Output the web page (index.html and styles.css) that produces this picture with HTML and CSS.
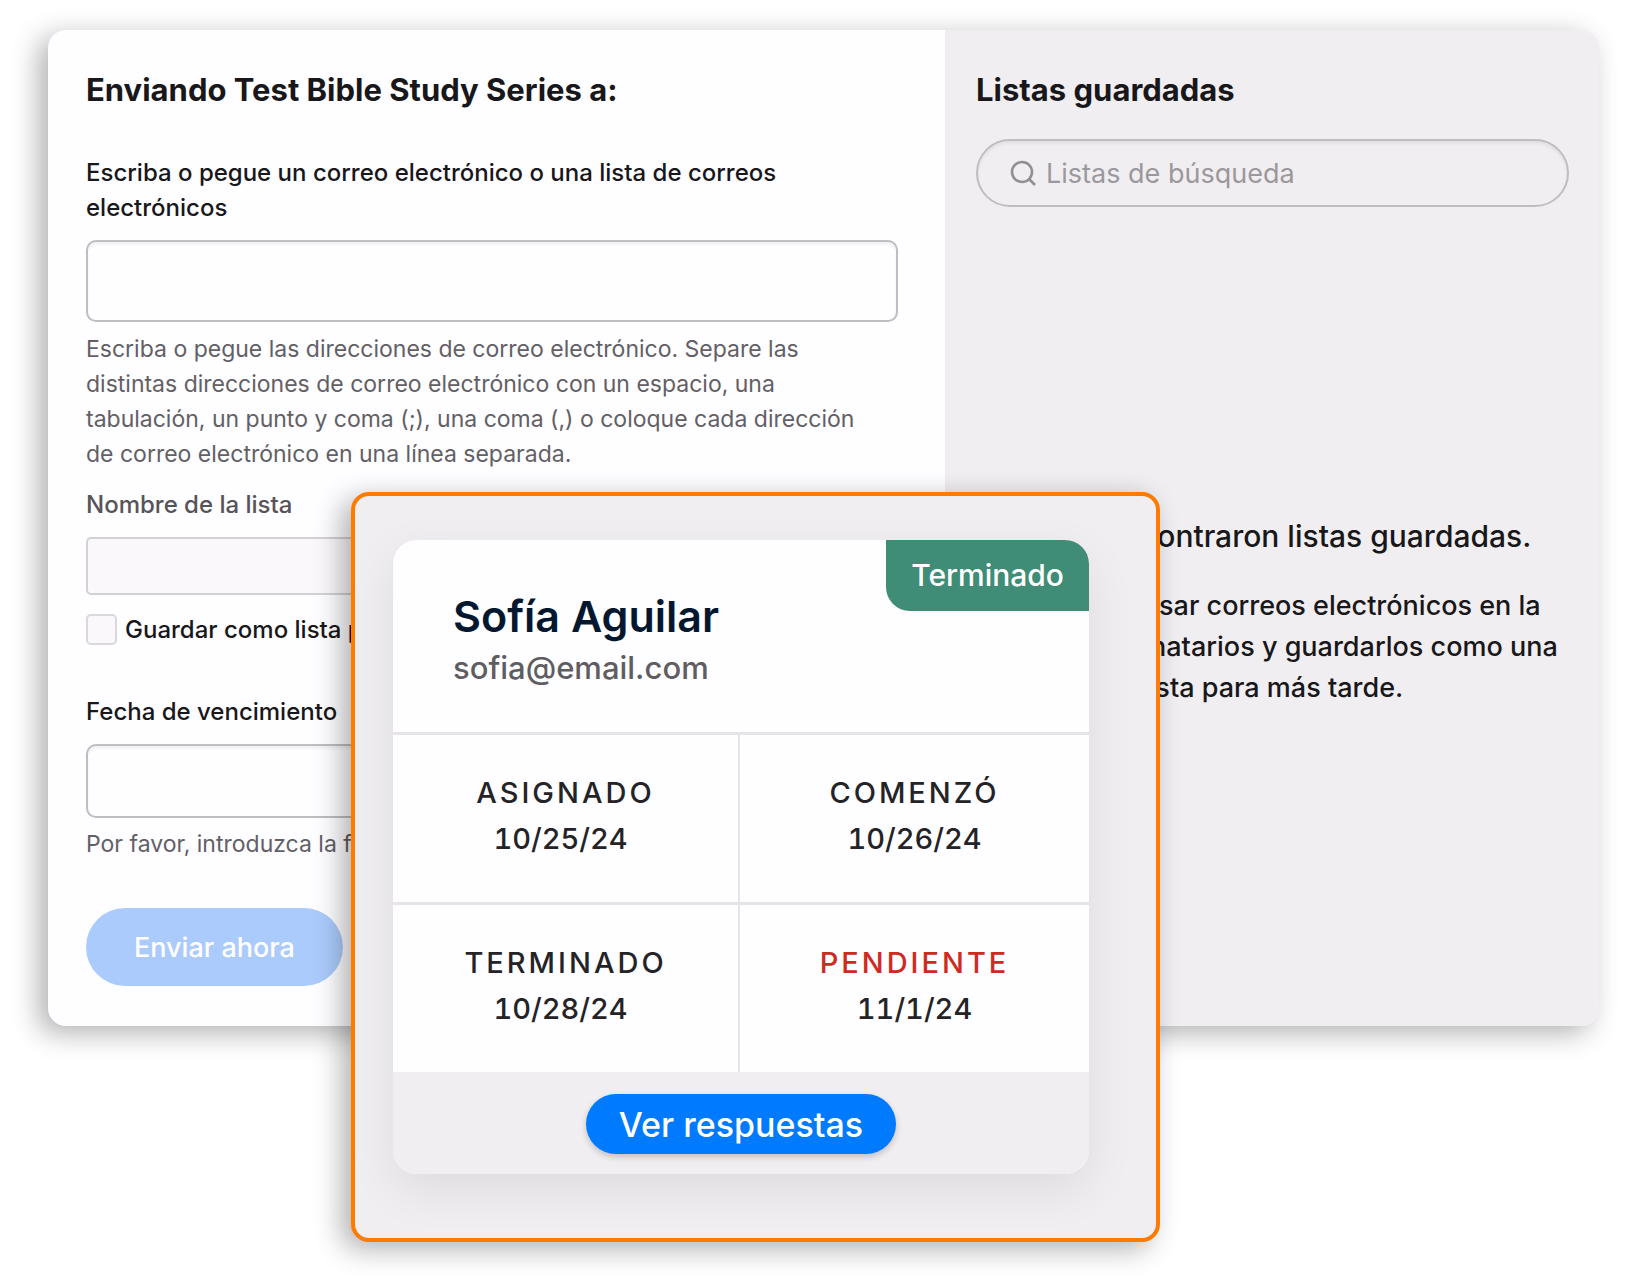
FILE: index.html
```html
<!DOCTYPE html>
<html lang="es">
<head>
<meta charset="utf-8">
<meta name="viewport" content="width=device-width, initial-scale=1">
<title>Enviar serie</title>
<link rel="stylesheet" href="styles.css">
</head>
<body>
<main class="stage">
  <div class="panel">
    <form class="send">
      <h1 class="title">Enviando Test Bible Study Series a:</h1>

      <label class="label label-emails" for="emails">Escriba o pegue un correo electrónico o una lista de correos electrónicos</label>
      <textarea class="field field-emails" id="emails"></textarea>
      <p class="help help-emails">Escriba o pegue las direcciones de correo electrónico. Separe las distintas direcciones de correo electrónico con un espacio, una tabulación, un punto y coma (;), una coma (,) o coloque cada dirección de correo electrónico en una línea separada.</p>

      <label class="label label-muted" for="list-name">Nombre de la lista</label>
      <input class="field field-disabled" id="list-name" type="text" disabled>
      <div class="check">
        <input class="check-box" id="save-list" type="checkbox" disabled>
        <label class="label" for="save-list">Guardar como lista propia</label>
      </div>

      <label class="label" for="due">Fecha de vencimiento</label>
      <input class="field field-date" id="due" type="text">
      <p class="help">Por favor, introduzca la fecha.</p>

      <button class="send-button" type="button">Enviar ahora</button>
    </form>

    <aside class="saved">
      <h2 class="title">Listas guardadas</h2>
      <div class="search">
        <svg class="search-icon" viewBox="0 0 28 28" aria-hidden="true"><circle cx="13" cy="13" r="10"/><path d="M20 20l6 6"/></svg>
        <input class="search-input" type="search" aria-label="Listas de búsqueda" placeholder="Listas de búsqueda">
      </div>
      <div class="empty">
        <p class="empty-title">No se encontraron listas guardadas.</p>
        <p class="empty-text">Puede ingresar correos electrónicos en la<br>lista de destinatarios y guardarlos como una<br>lista para más tarde.</p>
      </div>
    </aside>
  </div>

  <section class="overlay">
    <article class="card">
      <header class="card-head">
        <h2 class="name">Sofía Aguilar</h2>
        <p class="email">sofia@email.com</p>
        <span class="badge">Terminado</span>
      </header>
      <dl class="dates">
        <div class="date"><dt>ASIGNADO</dt><dd>10/25/24</dd></div>
        <div class="date"><dt>COMENZÓ</dt><dd>10/26/24</dd></div>
        <div class="date"><dt>TERMINADO</dt><dd>10/28/24</dd></div>
        <div class="date date-due"><dt>PENDIENTE</dt><dd>11/1/24</dd></div>
      </dl>
      <footer class="card-foot">
        <button class="answers-button" type="button">Ver respuestas</button>
      </footer>
    </article>
  </section>
</main>
</body>
</html>
```
FILE: styles.css
```css
* { box-sizing: border-box; }

body {
  margin: 0;
  background: #fff;
  color: #18171a;
  font-family: Inter, "Liberation Sans", sans-serif;
}

h1, h2, p, dl, dd { margin: 0; }

button, input, textarea { font-family: inherit; }

/* The panel and the card share one grid cell, so the card lies over the panel */
.stage {
  display: grid;
  grid-template-columns: minmax(0, 1fr);
  align-items: start;
  padding: 30px 27px 45px 48px;
}

.panel,
.overlay { grid-area: 1 / 1; }

/* Send panel */
.panel {
  display: grid;
  grid-template-columns: 897fr 654fr;
  border-radius: 18px;
  background: #fefdff;
  box-shadow: -9px 7px 28px rgba(0, 0, 0, .31);
}

.send {
  display: flex;
  flex-direction: column;
  align-items: stretch;
  padding: 40px 47px 40px 38px;
}

.title {
  font-size: 31px;
  line-height: 40px;
  font-weight: 700;
}

.label {
  font-size: 24px;
  line-height: 35px;
  font-weight: 450;
}

.label-emails { margin-top: 45px; }

.label-muted { color: #565458; }

.help {
  padding-right: 20px;
  color: #626065;
  font-size: 23px;
  line-height: 35px;
}

.help-emails { margin: 10px 0 15px; }

.field {
  width: 100%;
  border: 2px solid #bfbdc1;
  border-radius: 10px;
  background: #fefdff;
  box-shadow: inset 0 3px 3px rgba(0, 0, 0, .05);
  resize: none;
}

.field-emails { height: 82px; margin-top: 15px; }

.field-disabled {
  height: 58px;
  margin-top: 15px;
  border-color: #d3d1d5;
  border-radius: 5px;
  background: #faf8fb;
  box-shadow: none;
}

.check {
  display: flex;
  align-items: center;
  gap: 8px;
  margin: 17px 0 47px;
}

.check-box {
  width: 31px;
  height: 31px;
  margin: 0;
  border: 2px solid #dad8dc;
  border-radius: 5px;
  background: #faf8fb;
  appearance: none;
}

.field-date { height: 74px; margin: 15px 0 9px; }

.send-button {
  align-self: flex-start;
  height: 78px;
  margin-top: 46px;
  padding: 0 48px;
  border: 0;
  border-radius: 39px;
  background: #abcbfc;
  color: #fff;
  font-size: 27px;
  font-weight: 500;
}

/* Saved lists */
.saved {
  padding: 40px 30px 40px 31px;
  border-radius: 0 18px 18px 0;
  background: #f0eef1;
}

.search {
  display: flex;
  align-items: center;
  gap: 9px;
  height: 68px;
  margin-top: 29px;
  padding: 0 31px;
  border: 2px solid #bfbdc1;
  border-radius: 34px;
  box-shadow: inset 0 3px 3px rgba(0, 0, 0, .05);
}

.search-icon {
  flex: none;
  width: 28px;
  height: 28px;
  fill: none;
  stroke: #918f94;
  stroke-width: 2.6;
}

.search-input {
  flex: 1;
  min-width: 0;
  padding: 0;
  border: 0;
  outline: 0;
  background: none;
  font-size: 27px;
}

.search-input::placeholder { color: #9a989d; opacity: 1; }

.empty {
  margin-top: 309px;
  text-align: center;
  font-weight: 500;
  white-space: nowrap;
}

.empty-title { font-size: 30px; line-height: 40px; }

.empty-text {
  margin-top: 29px;
  font-size: 27px;
  line-height: 41px;
}

/* Assignment card lying over the panel */
.overlay {
  width: 809px;
  margin: 462px 0 0 303px;
  padding: 44px 67px 64px 38px;
  border: 4px solid #ff7b00;
  border-radius: 18px;
  background: #f0eef1;
  box-shadow: -9px 7px 28px rgba(0, 0, 0, .31);
}

.card {
  border-radius: 24px;
  background: #fefdff;
  box-shadow: 0 16px 48px rgba(0, 0, 0, .08);
}

.card-head {
  position: relative;
  height: 195px;
  padding: 48px 60px 0;
  border-bottom: 3px solid #e6e4e8;
}

.name {
  color: #03182f;
  font-size: 43px;
  line-height: 56px;
  font-weight: 600;
}

.email {
  color: #5f5d61;
  font-size: 31px;
  line-height: 48px;
  font-weight: 500;
}

.badge {
  position: absolute;
  top: 0;
  right: 0;
  padding: 0 25px;
  border-radius: 0 24px 0 24px;
  background: #3f8c77;
  color: #fff;
  font-size: 30px;
  line-height: 71px;
  font-weight: 500;
}

.dates {
  display: grid;
  grid-template-columns: 347fr 349fr;
}

.date {
  height: 170px;
  padding: 36px 0 0;
  border-right: 2px solid #e6e4e8;
  border-bottom: 3px solid #e6e4e8;
  text-align: center;
  color: #242326;
}

.date:nth-child(even) { border-right: 0; }

.date:nth-child(n + 3) { height: 167px; border-bottom: 0; }

.date dt {
  font-size: 29px;
  line-height: 44px;
  font-weight: 500;
  letter-spacing: 3px;
}

.date dd {
  font-size: 29px;
  line-height: 48px;
  font-weight: 500;
  font-variant-numeric: tabular-nums;
}

.date:nth-child(odd) dd { padding-right: 10px; }

.date-due dt { color: #cd2a21; }

.card-foot {
  display: flex;
  justify-content: center;
  padding: 22px 0 20px;
  border-radius: 0 0 24px 24px;
  background: #f0eef1;
}

.answers-button {
  height: 60px;
  padding: 0 33px;
  border: 0;
  border-radius: 30px;
  background: #007aff;
  box-shadow: 0 3px 6px rgba(0, 0, 0, .2);
  color: #fff;
  font-size: 34px;
  font-weight: 500;
}
```
